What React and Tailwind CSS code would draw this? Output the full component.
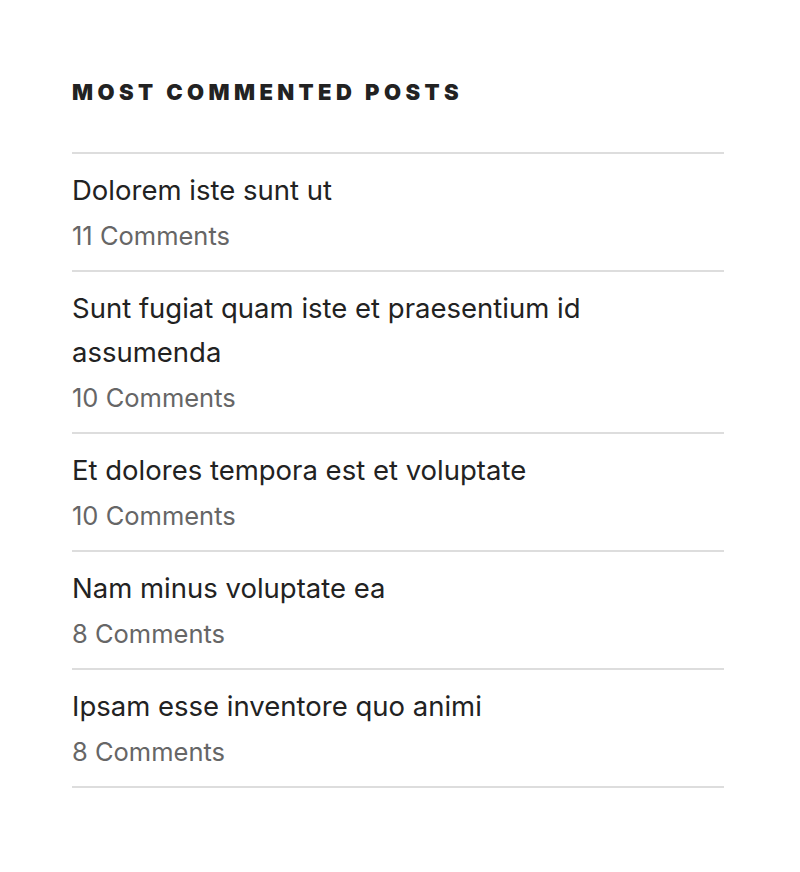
import React from "react";

const posts = [
  { title: "Dolorem iste sunt ut", count: "11 Comments" },
  { title: "Sunt fugiat quam iste et praesentium id assumenda", count: "10 Comments" },
  { title: "Et dolores tempora est et voluptate", count: "10 Comments" },
  { title: "Nam minus voluptate ea", count: "8 Comments" },
  { title: "Ipsam esse inventore quo animi", count: "8 Comments" },
];

export default function App() {
  return (
    <div className="min-h-[872px] w-[800px] bg-white pl-[72px] pt-[80px]" style={{ fontFamily: "Inter, 'Liberation Sans', sans-serif" }}>
      <div className="w-[652px]">
        <h2 className="text-[22px] font-black uppercase leading-[24px] tracking-[0.2em] text-[#222]">
          Most Commented Posts
        </h2>
        <ul className="mt-[48px] border-b-2 border-[#ddd]">
          {posts.map((p) => (
            <li key={p.title} className="border-t-2 border-[#ddd] pt-[14px] pb-[14px]">
              <div className="text-[27.5px] leading-[44px] text-[#222]">{p.title}</div>
              <div className="text-[25.5px] leading-[44px] text-[#666] pt-[2px] -mb-[2px]">{p.count}</div>
            </li>
          ))}
        </ul>
      </div>
    </div>
  );
}
